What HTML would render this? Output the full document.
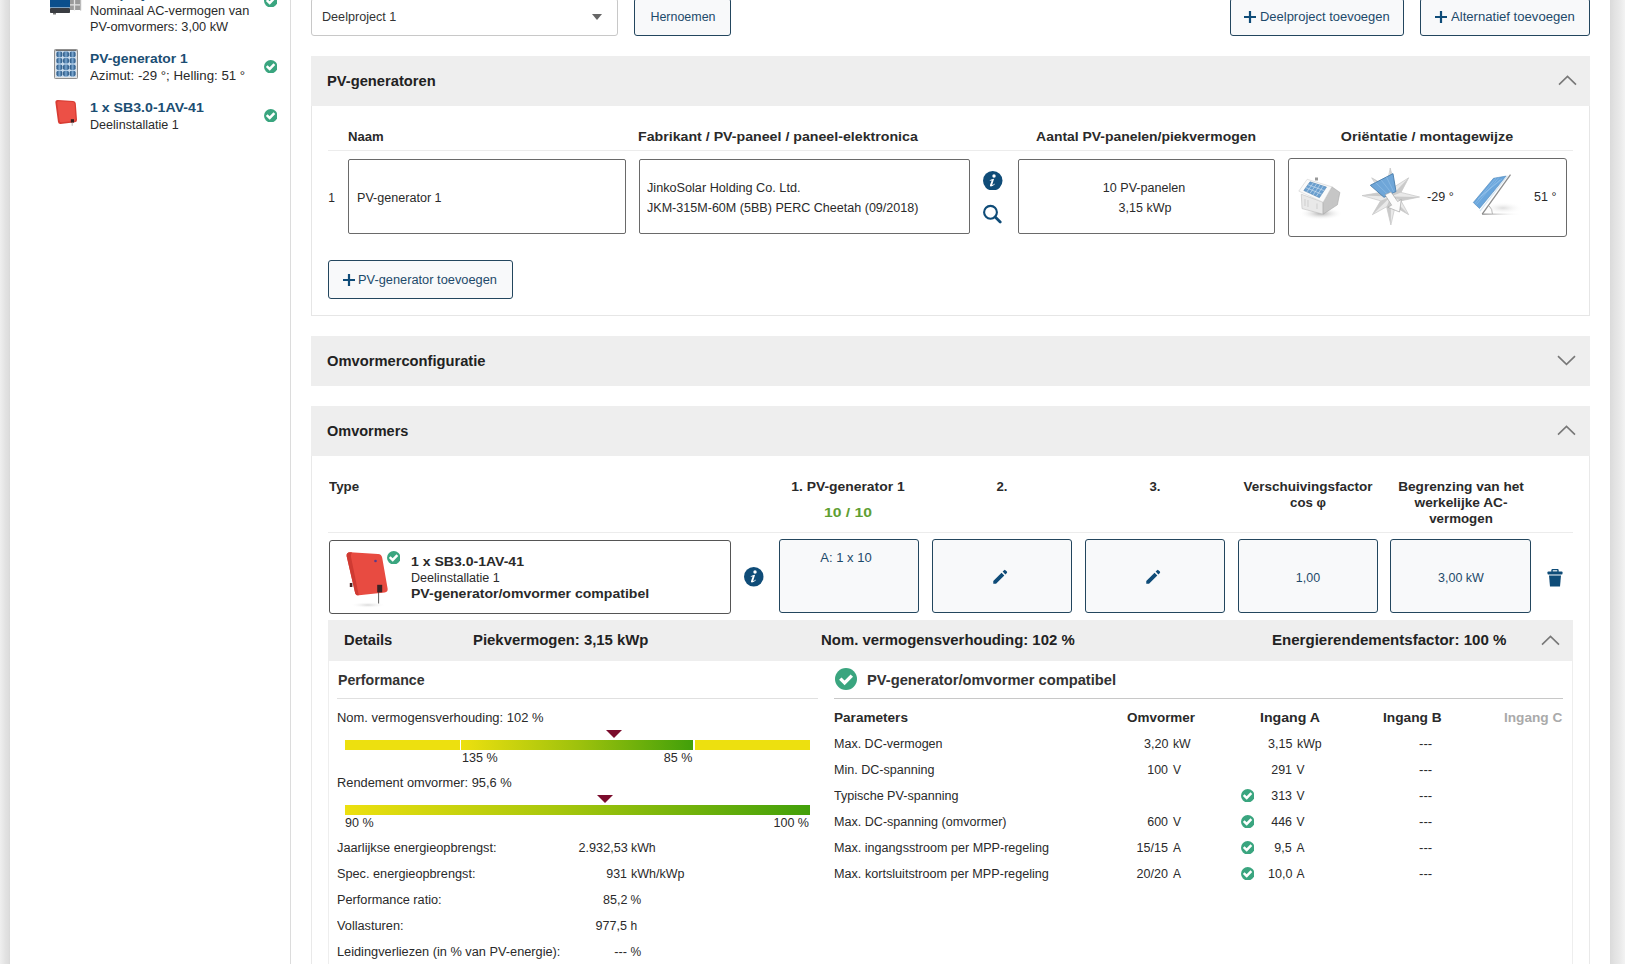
<!DOCTYPE html><html><head><meta charset="utf-8"><style>
html,body{margin:0;padding:0;}
body{width:1625px;height:964px;overflow:hidden;position:relative;background:#fff;font-family:"Liberation Sans",sans-serif;color:#2a2a2a;}
.t{position:absolute;white-space:nowrap;}
.b{position:absolute;box-sizing:border-box;}
</style></head><body>

<div class="b" style="left:0px;top:0px;width:10px;height:964px;background:linear-gradient(to right,#efefef 0%,#e2e2e2 55%,#dddddd 85%,#d8d8d8 100%);"></div>
<div class="b" style="left:1610px;top:0px;width:15px;height:964px;background:linear-gradient(to right,#dadada 0%,#e2e2e2 30%,#e8e8e8 60%,#f3f3f3 100%);"></div>
<div class="b" style="left:290px;top:0px;width:1px;height:964px;background:#dcdcdc;"></div>
<svg class="b" style="left:50px;top:-6px" width="32" height="21" viewBox="0 0 32 21"><rect x="20" y="0" width="11" height="16" fill="#9a9a9a"/><path d="M20 10.8H31 M24.5 0V16.5" stroke="#e4e4e4" stroke-width="1.3"/><rect x="30" y="0" width="1.2" height="16.5" fill="#bbb"/><rect x="0" y="0" width="20" height="13" fill="#0b4f8c"/><rect x="0" y="13" width="20" height="1" fill="#7ea3c4"/><rect x="0" y="14" width="20" height="5" rx="0.8" fill="#3a3d42"/><rect x="3" y="19" width="3" height="1.5" fill="#777"/></svg>
<div class="t" style="top:-12.66px;font-size:12px;line-height:15px;letter-spacing:0px;transform:scaleX(1.1592);transform-origin:0 0;font-weight:bold;color:#1b4e73;left:90px;">Deelproject 1</div>
<div class="t" style="top:4.34px;font-size:12px;line-height:15px;letter-spacing:0px;transform:scaleX(1.0613);transform-origin:0 0;left:90px;">Nominaal AC-vermogen van</div>
<div class="t" style="top:19.64px;font-size:12px;line-height:15px;letter-spacing:0px;transform:scaleX(1.0615);transform-origin:0 0;left:90px;">PV-omvormers: 3,00 kW</div>
<svg class="b" style="left:263.75px;top:-6.25px" width="13.5" height="13.5" viewBox="0 0 22 22"><circle cx="11" cy="11" r="11" fill="#3aa57f"/><path d="M4.4 10.1 L9.3 14.6 L16.9 6.9" fill="none" stroke="#fff" stroke-width="4.0" stroke-linecap="butt" stroke-linejoin="miter"/></svg>
<svg class="b" style="left:54px;top:48.5px" width="24" height="30" viewBox="0 0 24 30"><defs><linearGradient id="pc" x1="0" x2="1"><stop offset="0" stop-color="#1d4c7a"/><stop offset="0.5" stop-color="#7aa6cf"/><stop offset="1" stop-color="#1d4c7a"/></linearGradient></defs><rect x="0" y="0" width="24" height="30" rx="1" fill="#e2e2e2"/><rect x="0.5" y="0.5" width="23" height="29" rx="1" fill="none" stroke="#8f8f8f" stroke-width="1"/><rect x="1.5" y="1.2" width="21" height="1" fill="#555"/><rect x="2" y="2" width="20" height="26" fill="#c9dcee"/><rect x="2.5" y="2.6" width="5.8" height="5.6" rx="1.8" fill="url(#pc)"/><rect x="9.1" y="2.6" width="5.8" height="5.6" rx="1.8" fill="url(#pc)"/><rect x="15.7" y="2.6" width="5.8" height="5.6" rx="1.8" fill="url(#pc)"/><rect x="2.5" y="9.0" width="5.8" height="5.6" rx="1.8" fill="url(#pc)"/><rect x="9.1" y="9.0" width="5.8" height="5.6" rx="1.8" fill="url(#pc)"/><rect x="15.7" y="9.0" width="5.8" height="5.6" rx="1.8" fill="url(#pc)"/><rect x="2.5" y="15.4" width="5.8" height="5.6" rx="1.8" fill="url(#pc)"/><rect x="9.1" y="15.4" width="5.8" height="5.6" rx="1.8" fill="url(#pc)"/><rect x="15.7" y="15.4" width="5.8" height="5.6" rx="1.8" fill="url(#pc)"/><rect x="2.5" y="21.8" width="5.8" height="5.6" rx="1.8" fill="url(#pc)"/><rect x="9.1" y="21.8" width="5.8" height="5.6" rx="1.8" fill="url(#pc)"/><rect x="15.7" y="21.8" width="5.8" height="5.6" rx="1.8" fill="url(#pc)"/></svg>
<div class="t" style="top:52.34px;font-size:12px;line-height:15px;letter-spacing:0px;transform:scaleX(1.1535);transform-origin:0 0;font-weight:bold;color:#1b4e73;left:90px;">PV-generator 1</div>
<div class="t" style="top:69.34px;font-size:12px;line-height:15px;letter-spacing:0px;transform:scaleX(1.1058);transform-origin:0 0;left:90px;">Azimut: -29 °; Helling: 51 °</div>
<svg class="b" style="left:263.75px;top:59.75px" width="13.5" height="13.5" viewBox="0 0 22 22"><circle cx="11" cy="11" r="11" fill="#3aa57f"/><path d="M4.4 10.1 L9.3 14.6 L16.9 6.9" fill="none" stroke="#fff" stroke-width="4.0" stroke-linecap="butt" stroke-linejoin="miter"/></svg>
<svg class="b" style="left:54px;top:99px" width="25" height="27" viewBox="0 0 25 27"><path d="M1.4 3.6 Q1.2 1.0 3.8 1.1 L19.2 1.9 Q21.6 2.1 21.8 4.5 L23.0 20.8 Q23.2 23.0 21.0 23.3 L6.6 24.9 Q4.4 25.1 4.0 22.9 Z" fill="#d83c33"/><path d="M3.2 3.9 Q3.1 2.2 4.9 2.3 L18.6 3.0 Q20.4 3.1 20.6 4.9 L21.6 19.9 Q21.8 21.7 20.0 21.9 L7.6 23.3 Q5.9 23.5 5.6 21.8 Z" fill="#ec5046"/><rect x="16.8" y="20.2" width="3.2" height="3.4" fill="#3a1f1f"/><path d="M18.2 23.5 V26.8" stroke="#999" stroke-width="0.7"/></svg>
<div class="t" style="top:100.84px;font-size:12px;line-height:15px;letter-spacing:0px;transform:scaleX(1.1788);transform-origin:0 0;font-weight:bold;color:#1b4e73;left:89.6px;">1 x SB3.0-1AV-41</div>
<div class="t" style="top:117.84px;font-size:12px;line-height:15px;letter-spacing:0px;transform:scaleX(1.0472);transform-origin:0 0;left:90px;">Deelinstallatie 1</div>
<svg class="b" style="left:263.75px;top:108.75px" width="13.5" height="13.5" viewBox="0 0 22 22"><circle cx="11" cy="11" r="11" fill="#3aa57f"/><path d="M4.4 10.1 L9.3 14.6 L16.9 6.9" fill="none" stroke="#fff" stroke-width="4.0" stroke-linecap="butt" stroke-linejoin="miter"/></svg>
<div class="b" style="left:311px;top:-2px;width:306.5px;height:37.5px;border:1px solid #c8c8c8;border-radius:3px;background:#fff;"></div>
<div class="t" style="top:9.84px;font-size:12px;line-height:15px;letter-spacing:0px;transform:scaleX(1.0509);transform-origin:0 0;color:#333;left:322px;">Deelproject 1</div>
<svg class="b" style="left:592px;top:14px" width="10" height="6" viewBox="0 0 10 6"><path d="M0 0 H10 L5 6 Z" fill="#666"/></svg>
<div class="b" style="left:634px;top:-2px;width:97px;height:37.5px;border:1.5px solid #23465e;border-radius:3px;background:#f8f9fa;"></div>
<div class="t" style="top:9.84px;font-size:12px;line-height:15px;letter-spacing:0px;transform:scaleX(1.0383);transform-origin:50% 0;color:#1d4a6a;left:632.5px;width:100px;text-align:center;">Hernoemen</div>
<div class="b" style="left:1229.5px;top:-2px;width:174.5px;height:37.5px;border:1.5px solid #23465e;border-radius:3px;background:#f8f9fa;"></div>
<svg class="b" style="left:1244px;top:10.8px" width="12" height="12" viewBox="0 0 12 12"><path d="M0 6 H12 M6 0 V12" stroke="#0f4c78" stroke-width="2.2"/></svg>
<div class="t" style="top:9.94px;font-size:12px;line-height:15px;letter-spacing:0px;transform:scaleX(1.0800);transform-origin:0 0;color:#1d4a6a;left:1259.6px;">Deelproject toevoegen</div>
<div class="b" style="left:1420px;top:-2px;width:170px;height:37.5px;border:1.5px solid #23465e;border-radius:3px;background:#f8f9fa;"></div>
<svg class="b" style="left:1435px;top:10.8px" width="12" height="12" viewBox="0 0 12 12"><path d="M0 6 H12 M6 0 V12" stroke="#0f4c78" stroke-width="2.2"/></svg>
<div class="t" style="top:9.94px;font-size:12px;line-height:15px;letter-spacing:0px;transform:scaleX(1.0917);transform-origin:0 0;color:#1d4a6a;left:1450.5px;">Alternatief toevoegen</div>
<div class="b" style="left:311px;top:56px;width:1279px;height:50px;background:#eeeeee;"></div>
<div class="t" style="top:72.15px;font-size:14px;line-height:18px;letter-spacing:0px;transform:scaleX(1.0503);transform-origin:0 0;font-weight:bold;color:#222;left:327px;">PV-generatoren</div>
<svg class="b" style="left:1557.5px;top:75px" width="19" height="11" viewBox="0 0 19 11"><path d="M1 9.6 L9.5 1.4 L18 9.6" fill="none" stroke="#787878" stroke-width="1.6"/></svg>
<div class="b" style="left:311px;top:106px;width:1279px;height:209.6px;border:1px solid #e6e6e6;border-top:none;"></div>
<div class="t" style="top:130.34px;font-size:12px;line-height:15px;letter-spacing:0px;transform:scaleX(1.0918);transform-origin:0 0;font-weight:bold;left:348px;">Naam</div>
<div class="t" style="top:130.34px;font-size:12px;line-height:15px;letter-spacing:0px;transform:scaleX(1.1819);transform-origin:0 0;font-weight:bold;left:638px;">Fabrikant / PV-paneel / paneel-elektronica</div>
<div class="t" style="top:130.34px;font-size:12px;line-height:15px;letter-spacing:0px;transform:scaleX(1.1608);transform-origin:50% 0;font-weight:bold;left:995.5px;width:300px;text-align:center;">Aantal PV-panelen/piekvermogen</div>
<div class="t" style="top:130.34px;font-size:12px;line-height:15px;letter-spacing:0px;transform:scaleX(1.1908);transform-origin:50% 0;font-weight:bold;left:1276.7px;width:300px;text-align:center;">Oriëntatie / montagewijze</div>
<div class="b" style="left:328px;top:150px;width:1245px;height:1px;background:#ececec;"></div>
<div class="t" style="top:190.84px;font-size:12px;line-height:15px;letter-spacing:0.4px;left:328.2px;">1</div>
<div class="b" style="left:348px;top:159px;width:277.5px;height:74.5px;border:1px solid #6a6a6a;border-radius:2px;background:#fff;"></div>
<div class="t" style="top:190.84px;font-size:12px;line-height:15px;letter-spacing:0px;transform:scaleX(1.0483);transform-origin:0 0;left:357px;">PV-generator 1</div>
<div class="b" style="left:638.5px;top:159px;width:331.5px;height:74.5px;border:1px solid #6a6a6a;border-radius:2px;background:#fff;"></div>
<div class="t" style="top:181.14px;font-size:12px;line-height:15px;letter-spacing:0px;transform:scaleX(1.0554);transform-origin:0 0;left:646.6px;">JinkoSolar Holding Co. Ltd.</div>
<div class="t" style="top:200.84px;font-size:12px;line-height:15px;letter-spacing:0px;transform:scaleX(1.0463);transform-origin:0 0;left:646.6px;">JKM-315M-60M (5BB) PERC Cheetah (09/2018)</div>
<svg class="b" style="left:983.45px;top:170.65px" width="19.5" height="19.5" viewBox="0 0 20 20"><circle cx="10" cy="10" r="10" fill="#0f4c78"/><circle cx="11.3" cy="5.1" r="1.75" fill="#fff"/><path d="M6.9 9.5 Q9 8.3 11.4 8.0 L9.6 13.7 Q9.4 14.6 10.3 14.1 Q11.1 13.6 11.9 12.9 L12.1 13.6 Q10.3 15.7 8.2 15.9 Q6.7 16.0 7.2 14.4 L8.9 9.7 Q8.0 9.6 7.0 10.0 Z" fill="#fff"/></svg>
<svg class="b" style="left:982px;top:204px" width="20" height="20" viewBox="0 0 20 20"><circle cx="8.5" cy="8.3" r="6.4" fill="none" stroke="#0f4c78" stroke-width="2.1"/><path d="M13.2 13 L18.2 18" stroke="#0f4c78" stroke-width="2.8" stroke-linecap="round"/></svg>
<div class="b" style="left:1017.5px;top:159px;width:257.0px;height:74.5px;border:1px solid #6a6a6a;border-radius:2px;background:#fff;"></div>
<div class="t" style="top:180.84px;font-size:12px;line-height:15px;letter-spacing:0px;transform:scaleX(1.0457);transform-origin:50% 0;left:1024.0px;width:240px;text-align:center;">10 PV-panelen</div>
<div class="t" style="top:200.94px;font-size:12px;line-height:15px;letter-spacing:0px;transform:scaleX(1.0414);transform-origin:50% 0;left:1024.5px;width:240px;text-align:center;">3,15 kWp</div>
<div class="b" style="left:1287.5px;top:157.5px;width:279.0px;height:79.0px;border:1px solid #6a6a6a;border-radius:3px;background:#fff;"></div>
<svg class="b" style="left:1292px;top:165px" width="60" height="60" viewBox="0 0 60 60">
<defs><radialGradient id="hsh" cx="0.5" cy="0.5" r="0.5"><stop offset="0" stop-color="#b0b0b0"/><stop offset="1" stop-color="#fff" stop-opacity="0"/></radialGradient></defs>
<ellipse cx="29" cy="48.5" rx="22" ry="6.5" fill="url(#hsh)"/>
<path d="M9.3 29.2 L31.1 37.3 L31.1 49.2 L10 43.6 Z" fill="#e9e9e9" stroke="#bdbdbd" stroke-width="0.6"/>
<path d="M31.1 37.3 L39.8 21.8 L47.9 27.4 L45.4 39.8 L31.1 49.2 Z" fill="#c6c6c6" stroke="#a8a8a8" stroke-width="0.6"/>
<path d="M6.8 26.1 L15.2 14.3 L39.8 21.8 L31.1 37.3 Z" fill="#fafafa" stroke="#d0d0d0" stroke-width="0.6"/>
<path d="M11.8 25.5 L18 16.8 L34.5 22.1 L27.4 32.7 Z" fill="#6a9fcf" stroke="#4f7fab" stroke-width="0.5"/>
<path d="M13.9 22.6 L29.8 29.2 M15.9 19.7 L32.1 25.6 M14.9 26.9 L21.3 17.9 M18 28.4 L24.6 18.9 M21.2 29.8 L27.9 20 M24.3 31.3 L31.2 21" stroke="#d6e6f3" stroke-width="0.6"/>
<rect x="23" y="12.5" width="3" height="3" fill="#999"/>
<path d="M13 34 V41 M16 35 V42 M25 38.5 V44 M37 40 V44 M41 36 V41" stroke="#c4c4c4" stroke-width="0.7"/>
</svg>
<svg class="b" style="left:1358px;top:162px" width="66" height="66" viewBox="0 0 66 66">
<polygon points="32.2,6.0 37.0,24.4 50.7,15.8 43.0,30.4 61.6,35.0 43.0,38.8 50.7,52.7 37.0,44.8 32.9,63.0 28.6,44.8 14.4,52.7 22.6,38.8 4.1,33.6 22.6,30.4 13.7,15.8 28.6,24.4" fill="#e9e9e9" stroke="#bdbdbd" stroke-width="0.6"/>
<path d="M32.8 34.6 L32.2 6.0 L37.0 24.4 Z" fill="#cacaca"/><path d="M32.8 34.6 L50.7 15.8 L43.0 30.4 Z" fill="#cacaca"/><path d="M32.8 34.6 L61.6 35.0 L43.0 38.8 Z" fill="#cacaca"/><path d="M32.8 34.6 L50.7 52.7 L37.0 44.8 Z" fill="#cacaca"/><path d="M32.8 34.6 L32.9 63.0 L28.6 44.8 Z" fill="#cacaca"/><path d="M32.8 34.6 L14.4 52.7 L22.6 38.8 Z" fill="#cacaca"/><path d="M32.8 34.6 L4.1 33.6 L22.6 30.4 Z" fill="#cacaca"/><path d="M32.8 34.6 L13.7 15.8 L28.6 24.4 Z" fill="#cacaca"/>
<path d="M12.3 23.3 L35 11.6 L38 29.5 L26 35.3 Z" fill="#6fa6d8" stroke="#4a7eab" stroke-width="0.9"/>
<path d="M17.6 20.6 L29.9 32.6 M23 17.8 L33 30.5 M28.5 15 L35.7 29.8" stroke="#9cc6ea" stroke-width="0.5"/>
<path d="M33 30 L39.6 39.5 L43.3 37.5 L41.5 50 L29.8 45.2 L33.7 43.2 L27 32.8 Z" fill="#fbfbfb" stroke="#9a9a9a" stroke-width="0.6"/>
</svg>
<svg class="b" style="left:1466px;top:168px" width="64" height="52" viewBox="0 0 64 52">
<defs><linearGradient id="tg" x1="0" x2="1"><stop offset="0" stop-color="#8a8a8a"/><stop offset="1" stop-color="#fff" stop-opacity="0"/></linearGradient>
<radialGradient id="tsh" cx="0.5" cy="0.5" r="0.5"><stop offset="0" stop-color="#dedede"/><stop offset="1" stop-color="#fff" stop-opacity="0"/></radialGradient></defs>
<ellipse cx="37" cy="40" rx="20" ry="6" fill="url(#tsh)"/>
<path d="M7.3 34.5 L27.5 10.3 L40.2 8.1 L13.5 40.5 Z" fill="#6aa6dc" stroke="#4d86bb" stroke-width="0.6"/>
<path d="M10.5 36.5 L33 9.3 M9 35.5 L30 10 M15 28 L36 11 M12 31 L34 12" stroke="#9cc7ec" stroke-width="0.5"/>
<path d="M14 43.2 L41.5 7.6" stroke="#d6e6f2" stroke-width="1.2"/>
<path d="M16.2 46.1 L44.5 6.7" stroke="#8c8c8c" stroke-width="1.3"/>
<rect x="16.2" y="45.5" width="39" height="1.3" fill="url(#tg)"/>
<path d="M23.2 38 Q26.5 41 26.4 45.9" fill="none" stroke="#9a9a9a" stroke-width="0.7"/>
</svg>
<div class="t" style="top:190.04px;font-size:12px;line-height:15px;letter-spacing:0px;transform:scaleX(1.0471);transform-origin:0 0;left:1426.6px;">-29 °</div>
<div class="t" style="top:190.04px;font-size:12px;line-height:15px;letter-spacing:0px;transform:scaleX(1.0419);transform-origin:0 0;left:1533.5px;">51 °</div>
<div class="b" style="left:328px;top:259.5px;width:184.5px;height:39.0px;border:1.5px solid #23465e;border-radius:3px;background:#f8f9fa;"></div>
<svg class="b" style="left:343px;top:274px" width="12" height="12" viewBox="0 0 12 12"><path d="M0 6 H12 M6 0 V12" stroke="#0f4c78" stroke-width="2.2"/></svg>
<div class="t" style="top:273.04px;font-size:12px;line-height:15px;letter-spacing:0px;transform:scaleX(1.0678);transform-origin:0 0;color:#1d4a6a;left:358.4px;">PV-generator toevoegen</div>
<div class="b" style="left:311px;top:336px;width:1279px;height:50px;background:#eeeeee;"></div>
<div class="t" style="top:352.15px;font-size:14px;line-height:18px;letter-spacing:0px;transform:scaleX(1.0504);transform-origin:0 0;font-weight:bold;color:#222;left:327px;">Omvormerconfiguratie</div>
<svg class="b" style="left:1557.0px;top:355px" width="19" height="11" viewBox="0 0 19 11"><path d="M1 1.2 L9.5 9.4 L18 1.2" fill="none" stroke="#787878" stroke-width="1.6"/></svg>
<div class="b" style="left:311px;top:406px;width:1279px;height:50px;background:#eeeeee;"></div>
<div class="t" style="top:422.15px;font-size:14px;line-height:18px;letter-spacing:0px;transform:scaleX(1.0356);transform-origin:0 0;font-weight:bold;color:#222;left:327px;">Omvormers</div>
<svg class="b" style="left:1557.0px;top:424.5px" width="19" height="11" viewBox="0 0 19 11"><path d="M1 9.6 L9.5 1.4 L18 9.6" fill="none" stroke="#787878" stroke-width="1.6"/></svg>
<div class="b" style="left:311px;top:456px;width:1279px;height:524px;border:1px solid #e9e9e9;border-top:none;"></div>
<div class="t" style="top:480.34px;font-size:12px;line-height:15px;letter-spacing:0px;transform:scaleX(1.1106);transform-origin:0 0;font-weight:bold;left:328.6px;">Type</div>
<div class="t" style="top:480.34px;font-size:12px;line-height:15px;letter-spacing:0px;transform:scaleX(1.1550);transform-origin:50% 0;font-weight:bold;left:748.2px;width:200px;text-align:center;">1. PV-generator 1</div>
<div class="t" style="top:506.34px;font-size:12px;line-height:15px;letter-spacing:0px;transform:scaleX(1.3107);transform-origin:50% 0;font-weight:bold;color:#5f9f33;left:748.4px;width:200px;text-align:center;">10 / 10</div>
<div class="t" style="top:480.34px;font-size:12px;line-height:15px;letter-spacing:0px;transform:scaleX(1.0999);transform-origin:50% 0;font-weight:bold;left:951.6px;width:100px;text-align:center;">2.</div>
<div class="t" style="top:480.34px;font-size:12px;line-height:15px;letter-spacing:0px;transform:scaleX(1.0999);transform-origin:50% 0;font-weight:bold;left:1104.5px;width:100px;text-align:center;">3.</div>
<div class="t" style="top:480.34px;font-size:12px;line-height:15px;letter-spacing:0px;transform:scaleX(1.1224);transform-origin:50% 0;font-weight:bold;left:1207.5px;width:200px;text-align:center;">Verschuivingsfactor</div>
<div class="t" style="top:495.84px;font-size:12px;line-height:15px;letter-spacing:0px;transform:scaleX(1.0982);transform-origin:50% 0;font-weight:bold;left:1207.5px;width:200px;text-align:center;">cos φ</div>
<div class="t" style="top:480.34px;font-size:12px;line-height:15px;letter-spacing:0px;transform:scaleX(1.1352);transform-origin:50% 0;font-weight:bold;left:1361.0px;width:200px;text-align:center;">Begrenzing van het</div>
<div class="t" style="top:496.34px;font-size:12px;line-height:15px;letter-spacing:0px;transform:scaleX(1.1402);transform-origin:50% 0;font-weight:bold;left:1361.0px;width:200px;text-align:center;">werkelijke AC-</div>
<div class="t" style="top:512.34px;font-size:12px;line-height:15px;letter-spacing:0px;transform:scaleX(1.1074);transform-origin:50% 0;font-weight:bold;left:1361.0px;width:200px;text-align:center;">vermogen</div>
<div class="b" style="left:328px;top:532px;width:1245px;height:1px;background:#ececec;"></div>
<div class="b" style="left:328.5px;top:539.5px;width:402.0px;height:74.0px;border:1px solid #555;border-radius:3px;background:#fff;"></div>
<svg class="b" style="left:338px;top:544px" width="68" height="66" viewBox="0 0 68 66">
<defs><radialGradient id="ish" cx="0.5" cy="0.5" r="0.5"><stop offset="0" stop-color="#d8d8d8"/><stop offset="1" stop-color="#fff" stop-opacity="0"/></radialGradient></defs>
<ellipse cx="30" cy="61" rx="18" ry="3" fill="url(#ish)"/>
<path d="M8.6 12 Q8.4 8.2 12.2 8.3 L40 10 Q43.6 10.2 44.2 13.8 L49.6 44.5 Q50.2 48 46.6 48.4 L21 51.3 Q17.4 51.7 16.9 48 Z" fill="#e84b41"/>
<path d="M8.6 12 Q8.4 8.2 12.2 8.3 L14.2 8.4 Q12.5 9.5 13 13 L20.8 51.3 Q17.4 51.7 16.9 48 Z" fill="#cf3a32"/>
<rect x="39.2" y="40.8" width="5" height="7.5" fill="#3b2224"/>
<path d="M40.6 48 L40.6 59.5" stroke="#333" stroke-width="0.8"/>
<rect x="11.8" y="39" width="2.6" height="4" fill="#4a2222"/>
<circle cx="37.5" cy="17" r="1.3" fill="#5a3a8a"/>
</svg>
<svg class="b" style="left:386.75px;top:550.75px" width="13.5" height="13.5" viewBox="0 0 22 22"><circle cx="11" cy="11" r="11" fill="#3aa57f"/><path d="M4.4 10.1 L9.3 14.6 L16.9 6.9" fill="none" stroke="#fff" stroke-width="4.0" stroke-linecap="butt" stroke-linejoin="miter"/></svg>
<div class="t" style="top:555.04px;font-size:12px;line-height:15px;letter-spacing:0px;transform:scaleX(1.1710);transform-origin:0 0;font-weight:bold;left:411px;">1 x SB3.0-1AV-41</div>
<div class="t" style="top:571.04px;font-size:12px;line-height:15px;letter-spacing:0px;transform:scaleX(1.0472);transform-origin:0 0;left:411px;">Deelinstallatie 1</div>
<div class="t" style="top:586.94px;font-size:12px;line-height:15px;letter-spacing:0px;transform:scaleX(1.1707);transform-origin:0 0;font-weight:bold;left:410.6px;">PV-generator/omvormer compatibel</div>
<svg class="b" style="left:744.45px;top:567.25px" width="19.5" height="19.5" viewBox="0 0 20 20"><circle cx="10" cy="10" r="10" fill="#0f4c78"/><circle cx="11.3" cy="5.1" r="1.75" fill="#fff"/><path d="M6.9 9.5 Q9 8.3 11.4 8.0 L9.6 13.7 Q9.4 14.6 10.3 14.1 Q11.1 13.6 11.9 12.9 L12.1 13.6 Q10.3 15.7 8.2 15.9 Q6.7 16.0 7.2 14.4 L8.9 9.7 Q8.0 9.6 7.0 10.0 Z" fill="#fff"/></svg>
<div class="b" style="left:778.7px;top:539.3px;width:140.0px;height:74.2px;border:1.5px solid #23465e;border-radius:3px;background:#f8f9fa;"></div>
<div class="b" style="left:931.6px;top:539.3px;width:140.0px;height:74.2px;border:1.5px solid #23465e;border-radius:3px;background:#f8f9fa;"></div>
<div class="b" style="left:1084.5px;top:539.3px;width:140.0px;height:74.2px;border:1.5px solid #23465e;border-radius:3px;background:#f8f9fa;"></div>
<div class="b" style="left:1237.5px;top:539.3px;width:140.1px;height:74.2px;border:1.5px solid #23465e;border-radius:3px;background:#f8f9fa;"></div>
<div class="b" style="left:1390.3px;top:539.3px;width:141.2px;height:74.2px;border:1.5px solid #23465e;border-radius:3px;background:#f8f9fa;"></div>
<div class="t" style="top:550.84px;font-size:12px;line-height:15px;letter-spacing:0px;transform:scaleX(1.0845);transform-origin:50% 0;color:#1d4a6a;left:776.0px;width:140px;text-align:center;">A: 1 x 10</div>
<svg class="b" style="left:992.2px;top:568.4px" width="17" height="17" viewBox="0 0 16 16"><path d="M1.2 12.2 L1.2 14.8 L3.8 14.8 L11.6 7.0 L9.0 4.4 Z M12.6 6.0 L14.0 4.6 Q14.6 4.0 14.0 3.4 L12.6 2.0 Q12.0 1.4 11.4 2.0 L10.0 3.4 Z" fill="#0f4c78"/></svg>
<svg class="b" style="left:1145.2px;top:568.4px" width="17" height="17" viewBox="0 0 16 16"><path d="M1.2 12.2 L1.2 14.8 L3.8 14.8 L11.6 7.0 L9.0 4.4 Z M12.6 6.0 L14.0 4.6 Q14.6 4.0 14.0 3.4 L12.6 2.0 Q12.0 1.4 11.4 2.0 L10.0 3.4 Z" fill="#0f4c78"/></svg>
<div class="t" style="top:571.34px;font-size:12px;line-height:15px;letter-spacing:0px;transform:scaleX(1.0385);transform-origin:50% 0;color:#1d4a6a;left:1237.5px;width:140px;text-align:center;">1,00</div>
<div class="t" style="top:571.34px;font-size:12px;line-height:15px;letter-spacing:0px;transform:scaleX(1.0409);transform-origin:50% 0;color:#1d4a6a;left:1391.0px;width:140px;text-align:center;">3,00 kW</div>
<svg class="b" style="left:1547px;top:568.5px" width="16" height="18" viewBox="0 0 16 18"><rect x="5" y="0.5" width="6" height="3" rx="1" fill="none" stroke="#0f4c78" stroke-width="1.4"/><rect x="0.5" y="2.5" width="15" height="3" rx="0.8" fill="#0f4c78"/><path d="M2 6.5 H14 L13 17.5 H3 Z" fill="#0f4c78"/></svg>
<div class="b" style="left:328px;top:620px;width:1245px;height:40.5px;background:#eeeeee;"></div>
<div class="t" style="top:631.15px;font-size:14px;line-height:18px;letter-spacing:0px;transform:scaleX(1.0523);transform-origin:0 0;font-weight:bold;color:#222;left:344px;">Details</div>
<div class="t" style="top:631.15px;font-size:14px;line-height:18px;letter-spacing:0px;transform:scaleX(1.0637);transform-origin:0 0;font-weight:bold;color:#222;left:473.2px;">Piekvermogen: 3,15 kWp</div>
<div class="t" style="top:631.15px;font-size:14px;line-height:18px;letter-spacing:0px;transform:scaleX(1.0655);transform-origin:0 0;font-weight:bold;color:#222;left:820.7px;">Nom. vermogensverhouding: 102 %</div>
<div class="t" style="top:631.15px;font-size:14px;line-height:18px;letter-spacing:0px;transform:scaleX(1.0759);transform-origin:0 0;font-weight:bold;color:#222;left:1272px;">Energierendementsfactor: 100 %</div>
<svg class="b" style="left:1540.5px;top:634.5px" width="19" height="11" viewBox="0 0 19 11"><path d="M1 9.6 L9.5 1.4 L18 9.6" fill="none" stroke="#787878" stroke-width="1.6"/></svg>
<div class="b" style="left:328px;top:660.5px;width:1245px;height:319.5px;border:1px solid #eeeeee;border-top:none;"></div>
<div class="t" style="top:670.55px;font-size:14px;line-height:18px;letter-spacing:0px;transform:scaleX(1.0117);transform-origin:0 0;font-weight:bold;color:#333;left:337.5px;">Performance</div>
<div class="b" style="left:337px;top:698px;width:481px;height:1px;background:#e0e0e0;"></div>
<svg class="b" style="left:835.0px;top:668.0px" width="22" height="22" viewBox="0 0 22 22"><circle cx="11" cy="11" r="11" fill="#3aa57f"/><path d="M5.3 10.6 L9.6 14.9 L16.8 7.6" fill="none" stroke="#fff" stroke-width="3.4" stroke-linecap="butt" stroke-linejoin="miter"/></svg>
<div class="t" style="top:670.55px;font-size:14px;line-height:18px;letter-spacing:0px;transform:scaleX(1.0496);transform-origin:0 0;font-weight:bold;color:#333;left:867.3px;">PV-generator/omvormer compatibel</div>
<div class="b" style="left:834px;top:698px;width:729px;height:1px;background:#c8c8c8;"></div>
<div class="t" style="top:711.14px;font-size:12px;line-height:15px;letter-spacing:0px;transform:scaleX(1.0784);transform-origin:0 0;left:337px;">Nom. vermogensverhouding: 102 %</div>
<svg class="b" style="left:606px;top:730px" width="16" height="8" viewBox="0 0 16 8"><path d="M0 0 H16 L8 8 Z" fill="#7b0c2c"/></svg>
<div class="b" style="left:345px;top:740px;width:114.5px;height:10px;background:#ede00f;"></div>
<div class="b" style="left:461px;top:740px;width:232px;height:10px;background:linear-gradient(to right,#ede00f,#9fc20c 50%,#42a00a);"></div>
<div class="b" style="left:695px;top:740px;width:115px;height:10px;background:#ede00f;"></div>
<div class="t" style="top:750.84px;font-size:12px;line-height:15px;letter-spacing:0px;transform:scaleX(1.0470);transform-origin:0 0;left:461.5px;">135 %</div>
<div class="t" style="top:750.94px;font-size:12px;line-height:15px;letter-spacing:0px;transform:scaleX(1.0439);transform-origin:100% 0;right:932.2px;text-align:right;">85 %</div>
<div class="t" style="top:776.34px;font-size:12px;line-height:15px;letter-spacing:0px;transform:scaleX(1.0689);transform-origin:0 0;left:337px;">Rendement omvormer: 95,6 %</div>
<svg class="b" style="left:597px;top:795px" width="16" height="8" viewBox="0 0 16 8"><path d="M0 0 H16 L8 8 Z" fill="#7b0c2c"/></svg>
<div class="b" style="left:345px;top:805px;width:465px;height:10px;background:linear-gradient(to right,#ede00f,#a8c70c 45%,#42a00a);"></div>
<div class="t" style="top:815.84px;font-size:12px;line-height:15px;letter-spacing:0px;transform:scaleX(1.0439);transform-origin:0 0;left:345px;">90 %</div>
<div class="t" style="top:815.74px;font-size:12px;line-height:15px;letter-spacing:0px;transform:scaleX(1.0470);transform-origin:100% 0;right:816px;text-align:right;">100 %</div>
<div class="t" style="top:840.94px;font-size:12px;line-height:15px;letter-spacing:0px;transform:scaleX(1.0630);transform-origin:0 0;left:337px;">Jaarlijkse energieopbrengst:</div>
<div class="t" style="top:840.94px;font-size:12px;line-height:15px;letter-spacing:0px;transform:scaleX(1.0525);transform-origin:100% 0;right:997.7px;text-align:right;">2.932,53</div>
<div class="t" style="top:840.94px;font-size:12px;line-height:15px;letter-spacing:0px;transform:scaleX(1.0292);transform-origin:0 0;left:630.5px;">kWh</div>
<div class="t" style="top:867.14px;font-size:12px;line-height:15px;letter-spacing:0px;transform:scaleX(1.0589);transform-origin:0 0;left:337px;">Spec. energieopbrengst:</div>
<div class="t" style="top:867.14px;font-size:12px;line-height:15px;letter-spacing:0px;transform:scaleX(1.0350);transform-origin:100% 0;right:997.7px;text-align:right;">931</div>
<div class="t" style="top:867.14px;font-size:12px;line-height:15px;letter-spacing:0px;transform:scaleX(1.0409);transform-origin:0 0;left:630.5px;">kWh/kWp</div>
<div class="t" style="top:893.34px;font-size:12px;line-height:15px;letter-spacing:0px;transform:scaleX(1.0603);transform-origin:0 0;left:337px;">Performance ratio:</div>
<div class="t" style="top:893.34px;font-size:12px;line-height:15px;letter-spacing:0px;transform:scaleX(1.0450);transform-origin:100% 0;right:997.7px;text-align:right;">85,2</div>
<div class="t" style="top:893.34px;font-size:12px;line-height:15px;letter-spacing:0.35px;left:630.5px;">%</div>
<div class="t" style="top:919.04px;font-size:12px;line-height:15px;letter-spacing:0px;transform:scaleX(1.0614);transform-origin:0 0;left:337px;">Vollasturen:</div>
<div class="t" style="top:919.04px;font-size:12px;line-height:15px;letter-spacing:0px;transform:scaleX(1.0466);transform-origin:100% 0;right:997.7px;text-align:right;">977,5</div>
<div class="t" style="top:919.04px;font-size:12px;line-height:15px;letter-spacing:0.35px;left:630.5px;">h</div>
<div class="t" style="top:945.04px;font-size:12px;line-height:15px;letter-spacing:0px;transform:scaleX(1.0633);transform-origin:0 0;left:337px;">Leidingverliezen (in % van PV-energie):</div>
<div class="t" style="top:945.04px;font-size:12px;line-height:15px;letter-spacing:0px;transform:scaleX(1.0584);transform-origin:100% 0;right:997.7px;text-align:right;">---</div>
<div class="t" style="top:945.04px;font-size:12px;line-height:15px;letter-spacing:0.35px;left:630.5px;">%</div>
<div class="t" style="top:711.34px;font-size:12px;line-height:15px;letter-spacing:0px;transform:scaleX(1.1308);transform-origin:0 0;font-weight:bold;left:834.3px;">Parameters</div>
<div class="t" style="top:711.34px;font-size:12px;line-height:15px;letter-spacing:0px;transform:scaleX(1.1211);transform-origin:0 0;font-weight:bold;left:1126.6px;">Omvormer</div>
<div class="t" style="top:711.34px;font-size:12px;line-height:15px;letter-spacing:0px;transform:scaleX(1.1789);transform-origin:0 0;font-weight:bold;left:1259.6px;">Ingang A</div>
<div class="t" style="top:711.34px;font-size:12px;line-height:15px;letter-spacing:0px;transform:scaleX(1.1432);transform-origin:0 0;font-weight:bold;left:1382.8px;">Ingang B</div>
<div class="t" style="top:711.34px;font-size:12px;line-height:15px;letter-spacing:0px;transform:scaleX(1.1364);transform-origin:0 0;font-weight:bold;color:#aaaaaa;left:1503.8px;">Ingang C</div>
<div class="t" style="top:737.34px;font-size:12px;line-height:15px;letter-spacing:0px;transform:scaleX(1.0433);transform-origin:0 0;left:834px;">Max. DC-vermogen</div>
<div class="t" style="top:737.34px;font-size:12px;line-height:15px;letter-spacing:0px;transform:scaleX(1.0450);transform-origin:100% 0;right:456.8px;text-align:right;">3,20</div>
<div class="t" style="top:737.34px;font-size:12px;line-height:15px;letter-spacing:0px;transform:scaleX(1.0202);transform-origin:0 0;left:1173px;">kW</div>
<div class="t" style="top:737.34px;font-size:12px;line-height:15px;letter-spacing:0px;transform:scaleX(1.0450);transform-origin:100% 0;right:333px;text-align:right;">3,15</div>
<div class="t" style="top:737.34px;font-size:12px;line-height:15px;letter-spacing:0px;transform:scaleX(1.0292);transform-origin:0 0;left:1296.5px;">kWp</div>
<div class="t" style="top:737.34px;font-size:12px;line-height:15px;letter-spacing:0px;transform:scaleX(1.1001);transform-origin:0 0;left:1419px;">---</div>
<div class="t" style="top:763.34px;font-size:12px;line-height:15px;letter-spacing:0px;transform:scaleX(1.0469);transform-origin:0 0;left:834px;">Min. DC-spanning</div>
<div class="t" style="top:763.34px;font-size:12px;line-height:15px;letter-spacing:0px;transform:scaleX(1.0350);transform-origin:100% 0;right:456.8px;text-align:right;">100</div>
<div class="t" style="top:763.34px;font-size:12px;line-height:15px;letter-spacing:0.35px;left:1173px;">V</div>
<div class="t" style="top:763.34px;font-size:12px;line-height:15px;letter-spacing:0px;transform:scaleX(1.0350);transform-origin:100% 0;right:333px;text-align:right;">291</div>
<div class="t" style="top:763.34px;font-size:12px;line-height:15px;letter-spacing:0.35px;left:1296.5px;">V</div>
<div class="t" style="top:763.34px;font-size:12px;line-height:15px;letter-spacing:0px;transform:scaleX(1.1001);transform-origin:0 0;left:1419px;">---</div>
<div class="t" style="top:789.34px;font-size:12px;line-height:15px;letter-spacing:0px;transform:scaleX(1.0480);transform-origin:0 0;left:834px;">Typische PV-spanning</div>
<svg class="b" style="left:1240.75px;top:788.75px" width="13.5" height="13.5" viewBox="0 0 22 22"><circle cx="11" cy="11" r="11" fill="#3aa57f"/><path d="M4.4 10.1 L9.3 14.6 L16.9 6.9" fill="none" stroke="#fff" stroke-width="4.0" stroke-linecap="butt" stroke-linejoin="miter"/></svg>
<div class="t" style="top:789.34px;font-size:12px;line-height:15px;letter-spacing:0px;transform:scaleX(1.0350);transform-origin:100% 0;right:333px;text-align:right;">313</div>
<div class="t" style="top:789.34px;font-size:12px;line-height:15px;letter-spacing:0.35px;left:1296.5px;">V</div>
<div class="t" style="top:789.34px;font-size:12px;line-height:15px;letter-spacing:0px;transform:scaleX(1.1001);transform-origin:0 0;left:1419px;">---</div>
<div class="t" style="top:815.34px;font-size:12px;line-height:15px;letter-spacing:0px;transform:scaleX(1.0474);transform-origin:0 0;left:834px;">Max. DC-spanning (omvormer)</div>
<div class="t" style="top:815.34px;font-size:12px;line-height:15px;letter-spacing:0px;transform:scaleX(1.0350);transform-origin:100% 0;right:456.8px;text-align:right;">600</div>
<div class="t" style="top:815.34px;font-size:12px;line-height:15px;letter-spacing:0.35px;left:1173px;">V</div>
<svg class="b" style="left:1240.75px;top:814.75px" width="13.5" height="13.5" viewBox="0 0 22 22"><circle cx="11" cy="11" r="11" fill="#3aa57f"/><path d="M4.4 10.1 L9.3 14.6 L16.9 6.9" fill="none" stroke="#fff" stroke-width="4.0" stroke-linecap="butt" stroke-linejoin="miter"/></svg>
<div class="t" style="top:815.34px;font-size:12px;line-height:15px;letter-spacing:0px;transform:scaleX(1.0350);transform-origin:100% 0;right:333px;text-align:right;">446</div>
<div class="t" style="top:815.34px;font-size:12px;line-height:15px;letter-spacing:0.35px;left:1296.5px;">V</div>
<div class="t" style="top:815.34px;font-size:12px;line-height:15px;letter-spacing:0px;transform:scaleX(1.1001);transform-origin:0 0;left:1419px;">---</div>
<div class="t" style="top:841.34px;font-size:12px;line-height:15px;letter-spacing:0px;transform:scaleX(1.0498);transform-origin:0 0;left:834px;">Max. ingangsstroom per MPP-regeling</div>
<div class="t" style="top:841.34px;font-size:12px;line-height:15px;letter-spacing:0px;transform:scaleX(1.0466);transform-origin:100% 0;right:456.8px;text-align:right;">15/15</div>
<div class="t" style="top:841.34px;font-size:12px;line-height:15px;letter-spacing:0.35px;left:1173px;">A</div>
<svg class="b" style="left:1240.75px;top:840.75px" width="13.5" height="13.5" viewBox="0 0 22 22"><circle cx="11" cy="11" r="11" fill="#3aa57f"/><path d="M4.4 10.1 L9.3 14.6 L16.9 6.9" fill="none" stroke="#fff" stroke-width="4.0" stroke-linecap="butt" stroke-linejoin="miter"/></svg>
<div class="t" style="top:841.34px;font-size:12px;line-height:15px;letter-spacing:0px;transform:scaleX(1.0420);transform-origin:100% 0;right:333px;text-align:right;">9,5</div>
<div class="t" style="top:841.34px;font-size:12px;line-height:15px;letter-spacing:0.35px;left:1296.5px;">A</div>
<div class="t" style="top:841.34px;font-size:12px;line-height:15px;letter-spacing:0px;transform:scaleX(1.1001);transform-origin:0 0;left:1419px;">---</div>
<div class="t" style="top:867.34px;font-size:12px;line-height:15px;letter-spacing:0px;transform:scaleX(1.0529);transform-origin:0 0;left:834px;">Max. kortsluitstroom per MPP-regeling</div>
<div class="t" style="top:867.34px;font-size:12px;line-height:15px;letter-spacing:0px;transform:scaleX(1.0466);transform-origin:100% 0;right:456.8px;text-align:right;">20/20</div>
<div class="t" style="top:867.34px;font-size:12px;line-height:15px;letter-spacing:0.35px;left:1173px;">A</div>
<svg class="b" style="left:1240.75px;top:866.75px" width="13.5" height="13.5" viewBox="0 0 22 22"><circle cx="11" cy="11" r="11" fill="#3aa57f"/><path d="M4.4 10.1 L9.3 14.6 L16.9 6.9" fill="none" stroke="#fff" stroke-width="4.0" stroke-linecap="butt" stroke-linejoin="miter"/></svg>
<div class="t" style="top:867.34px;font-size:12px;line-height:15px;letter-spacing:0px;transform:scaleX(1.0450);transform-origin:100% 0;right:333px;text-align:right;">10,0</div>
<div class="t" style="top:867.34px;font-size:12px;line-height:15px;letter-spacing:0.35px;left:1296.5px;">A</div>
<div class="t" style="top:867.34px;font-size:12px;line-height:15px;letter-spacing:0px;transform:scaleX(1.1001);transform-origin:0 0;left:1419px;">---</div>
</body></html>
